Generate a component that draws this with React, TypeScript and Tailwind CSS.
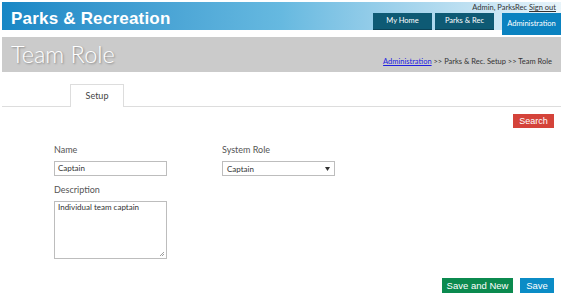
const ui = "font-['Lato','Open_Sans',sans-serif]";
const arial = "font-['Liberation_Sans',Arial,sans-serif]";

function NavTab({ label, active }: { label: string; active?: boolean }) {
  return (
    <div
      className={
        active
          ? "w-[59px] h-[22px] bg-[#0a82c0] text-white text-[7.5px] flex items-start pt-[5px] justify-center"
          : "w-[59px] h-[17px] bg-[#0e5a74] text-white text-[7.5px] flex items-center justify-center border-b border-[#0a4358]"
      }
    >
      {label}
    </div>
  );
}

export default function App() {
  return (
    <div className={`w-[563px] h-[299px] bg-white overflow-hidden ${ui}`}>
      {/* top banner */}
      <div className="mx-[2px] mt-[2px] h-[28px] flex justify-between bg-gradient-to-r from-[#1787c5] via-[#66b9e0] to-[#e8f4fa]">
        <div className={`pl-[9px] pt-[4px] text-white text-[17px] font-bold tracking-[0.2px] ${arial}`}>
          Parks &amp; Recreation
        </div>
        <div className="flex flex-col items-end">
          <div className="h-[12px] pr-[5px] pt-[1px] text-[7.5px] text-[#333] leading-[10px]">
            Admin, ParksRec <span className="underline">Sign out</span>
          </div>
          <div className="flex items-start gap-[3px]">
            <NavTab label="My Home" />
            <NavTab label="Parks & Rec" />
            <div className="ml-[5px]">
              <NavTab label="Administration" active />
            </div>
          </div>
        </div>
      </div>

      {/* page title */}
      <div className="mx-[2px] mt-[7px] h-[35px] bg-[#cbcbcb] flex items-end justify-between">
        <div className="pl-[9px] pb-[4px] text-white text-[23.5px] font-light leading-[28px] [text-shadow:1px_1px_2px_rgba(0,0,0,0.35)]">
          Team Role
        </div>
        <div className="pr-[9px] pb-[5px] text-[7.5px] text-[#333]">
          <span className="text-[#2020e0] underline">Administration</span> &gt;&gt; Parks &amp; Rec. Setup &gt;&gt; Team Role
        </div>
      </div>

      {/* tabs */}
      <div className="mx-[2px] mt-[12px] flex border-b border-[#dddddd] pl-[68px]">
        <div className="w-[54px] h-[23px] -mb-px border border-b-0 border-[#dddddd] bg-white flex items-center justify-center text-[9px] text-[#444]">
          Setup
        </div>
      </div>

      <div className="flex justify-end pr-[9px] mt-[7px]">
        <button className={`w-[41px] h-[14px] bg-[#d4433a] text-white text-[9px] leading-[14px] ${arial}`}>
          Search
        </button>
      </div>

      {/* form */}
      <div className="pl-[54px] mt-[16px] flex gap-[55px] text-[#555]">
        <div className="flex flex-col">
          <label className="text-[9px] leading-[12px]">Name</label>
          <div className="mt-[5px] w-[113px] h-[15px] border border-[#bdbdbd] text-[8px] text-[#333] pl-[3px] leading-[13px]">
            Captain
          </div>
          <label className="mt-[8px] text-[9px] leading-[12px]">Description</label>
          <div className="relative mt-[5px] w-[113px] h-[58px] border border-[#bdbdbd] text-[8px] text-[#333] pl-[3px] leading-[11px]">
            Individual team captain
            <svg className="absolute right-[1px] bottom-[1px]" width="6" height="6" viewBox="0 0 6 6">
              <path d="M5 1 L1 5 M5 3 L3 5" stroke="#888" strokeWidth="0.8" />
            </svg>
          </div>
        </div>
        <div className="flex flex-col">
          <label className="text-[9px] leading-[12px]">System Role</label>
          <div className="mt-[5px] w-[113px] h-[15px] border border-[#bdbdbd] text-[8px] text-[#333] pl-[4px] pr-[4px] flex items-center justify-between">
            <span>Captain</span>
            <svg width="5" height="4" viewBox="0 0 5 4">
              <path d="M0 0 H5 L2.5 4 Z" fill="#333" />
            </svg>
          </div>
        </div>
      </div>

      {/* actions */}
      <div className={`flex justify-end gap-[7px] pr-[9px] mt-[19px] ${arial}`}>
        <button className="w-[71px] h-[15px] bg-[#0b8a4f] text-white text-[9.5px] leading-[15px]">
          Save and New
        </button>
        <button className="w-[34px] h-[15px] bg-[#0b8cc6] text-white text-[9.5px] leading-[15px]">
          Save
        </button>
      </div>
    </div>
  );
}
